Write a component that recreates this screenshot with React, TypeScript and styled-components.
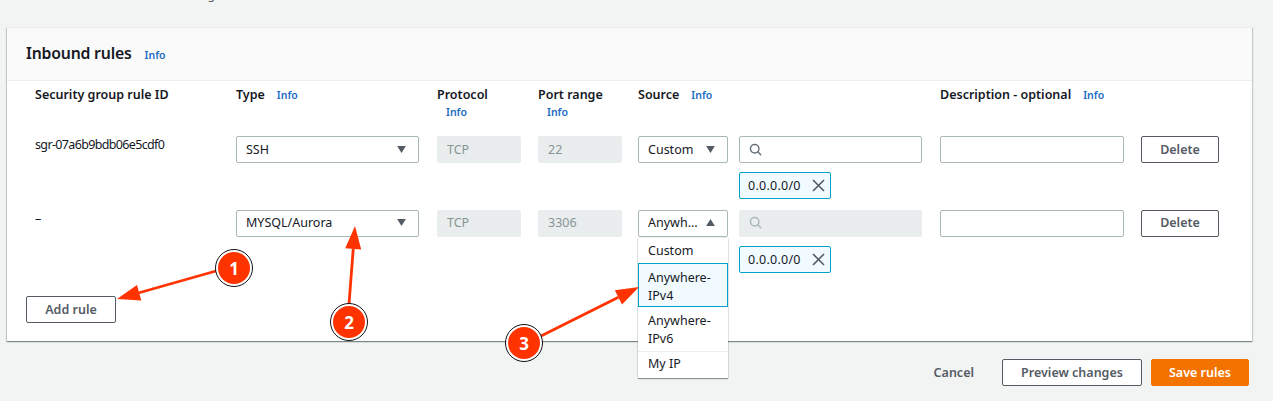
import React from "react";
import styled, { createGlobalStyle } from "styled-components";

const FONT = `"Noto Sans", "Liberation Sans", sans-serif`;

const GlobalStyle = createGlobalStyle`
  html, body {
    margin: 0;
    padding: 0;
    background: #f2f3f3;
  }
  body {
    font-family: ${FONT};
    font-size: 12.5px;
    color: #16191f;
  }
`;

const Page = styled.div`
  position: relative;
  width: 1273px;
  height: 401px;
  overflow: hidden;
  padding: 0 21px 0 7px;
  box-sizing: border-box;
`;

// the line above the panel is cut off by the screenshot, only a descender shows
const CutLine = styled.div`
  height: 27px;
  overflow: hidden;
  padding-left: 190px;
  color: #545b64;
  font-size: 12px;
  line-height: 14px;
  span {
    display: block;
    margin-top: -12px;
  }
`;

const Panel = styled.section`
  background: #fff;
  height: 314px;
  box-shadow: 0 1px 1px 0 rgba(0, 28, 36, 0.3), 1px 1px 1px 0 rgba(0, 28, 36, 0.15),
    -1px 1px 1px 0 rgba(0, 28, 36, 0.15);
  border-top: 1px solid #eaeded;
  box-sizing: border-box;
`;

const PanelHeader = styled.header`
  height: 53px;
  box-sizing: border-box;
  background: #fafafa;
  border-bottom: 1px solid #eaeded;
  padding: 14px 19px;
  display: flex;
  align-items: baseline;
  gap: 13px;
`;

const Title = styled.h2`
  margin: 0;
  font-size: 15.8px;
  line-height: 22px;
  font-weight: 600;
  letter-spacing: -0.2px;
`;

const InfoLink = styled.a`
  color: #1a6bc4;
  font-size: 10.5px;
  font-weight: 600;
  line-height: 14px;
`;

const RulesGrid = styled.div`
  display: grid;
  grid-template-columns: 201px 201px 101px 100px 101px 201px 201px 78px;
  padding: 5px 0 0 28px;
`;

const HeadCell = styled.div`
  font-size: 12.5px;
  font-weight: 600;
  line-height: 18px;
  height: 50px;
  display: flex;
  flex-wrap: wrap;
  align-items: baseline;
  align-content: flex-start;
  column-gap: 12px;
`;

const StackedInfo = styled(InfoLink)`
  display: block;
  width: 100%;
  margin: -1px 0 0 9px;
  line-height: 18px;
`;

const Cell = styled.div`
  height: 74px;
  display: flex;
  flex-direction: column;
  align-items: flex-start;
`;

const RuleId = styled.span`
  line-height: 16px;
  margin-top: 1px;
  letter-spacing: -0.65px;
`;

const Control = styled.div<{ $width: number; $disabled?: boolean; $raised?: boolean }>`
  width: ${(p) => p.$width}px;
  height: 27px;
  flex: none;
  box-sizing: border-box;
  border: 1px solid ${(p) => (p.$disabled ? "#eaeded" : "#aab7b8")};
  border-radius: 2px;
  background: ${(p) => (p.$disabled ? "#eaeded" : "#fff")};
  color: ${(p) => (p.$disabled ? "#879596" : "#16191f")};
  padding: 0 12px ${(p) => (p.$raised ? 2 : 0)}px 9px;
  display: flex;
  align-items: center;
  justify-content: space-between;
  white-space: nowrap;
`;

const Caret = styled.svg`
  width: 9px;
  height: 7px;
  fill: #545b64;
  flex: none;
`;

const SearchIcon = styled.svg<{ $muted?: boolean }>`
  width: 13px;
  height: 13px;
  fill: none;
  stroke: ${(p) => (p.$muted ? "#aab7b8" : "#687078")};
  stroke-width: 1.8;
`;

const SearchBox = styled(Control)`
  justify-content: flex-start;
`;

const Token = styled.div`
  margin-top: 9px;
  width: 92px;
  height: 27px;
  box-sizing: border-box;
  border: 1px solid #00a1c9;
  border-radius: 2px;
  background: #f1faff;
  padding: 0 5px 0 8px;
  display: flex;
  align-items: center;
  justify-content: space-between;
  letter-spacing: 0.25px;
`;

const TokenClose = styled.svg`
  width: 13px;
  height: 13px;
  stroke: #545b64;
  stroke-width: 1.6;
  fill: none;
`;

const Button = styled.button<{ $width?: number; $raised?: boolean }>`
  width: ${(p) => p.$width ?? 78}px;
  height: 27px;
  box-sizing: border-box;
  border: 1px solid #545b64;
  border-radius: 2px;
  background: #fff;
  color: #545b64;
  font-family: ${FONT};
  font-size: 12.5px;
  font-weight: 600;
  padding: 0 0 ${(p) => (p.$raised ? 2 : 0)}px;
`;

const AddRow = styled.div`
  padding: 12px 0 0 19px;
`;

const Footer = styled.footer`
  display: flex;
  justify-content: flex-end;
  align-items: center;
  margin-top: 18px;
  padding-right: 3px;
`;

const CancelLink = styled.span`
  color: #545b64;
  font-weight: 600;
  font-size: 12.5px;
  margin-right: 28px;
`;

const PrimaryButton = styled(Button)`
  background: #f37300;
  border-color: #f37300;
  color: #fff;
  margin-left: 9px;
`;

const SourceMenu = styled.ul`
  position: absolute;
  left: 638px;
  top: 238px;
  width: 90px;
  margin: 0;
  padding: 0;
  list-style: none;
  background: #fff;
  box-sizing: border-box;
  box-shadow: 0 1px 1px 0 rgba(0, 28, 36, 0.4), 0 0 1px 0 rgba(0, 28, 36, 0.4);
  z-index: 2;
`;

const MenuItem = styled.li`
  box-sizing: border-box;
  line-height: 18px;
  padding: 5px 10px 3px;
`;

const FirstMenuItem = styled(MenuItem)`
  padding: 4px 10px 3px;
`;

const ActiveMenuItem = styled(MenuItem)`
  padding: 5px 9px 1px;
  border: 1px solid #00a1c9;
  background: #f1faff;
`;

const LastMenuItem = styled(MenuItem)`
  padding: 3px 10px 5px;
  border-top: 1px solid #eaeded;
`;

const Arrows = styled.svg`
  position: absolute;
  left: 0;
  top: 0;
  width: 1273px;
  height: 401px;
  z-index: 3;
  pointer-events: none;
`;

const Badge = styled.div<{ $x: number; $y: number }>`
  position: absolute;
  left: ${(p) => p.$x}px;
  top: ${(p) => p.$y}px;
  width: 36px;
  height: 36px;
  box-sizing: border-box;
  border-radius: 50%;
  background: #ff3300;
  border: 2px solid #fff;
  outline: 1px solid #111;
  color: #fff;
  font-size: 17px;
  font-weight: 700;
  display: flex;
  align-items: center;
  justify-content: center;
  z-index: 4;
`;

const Magnifier = ({ muted }: { muted?: boolean }) => (
  <SearchIcon $muted={muted} viewBox="0 0 16 16">
    <circle cx="7" cy="7" r="5.2" />
    <path d="M10.8 10.8L15 15" />
  </SearchIcon>
);

const DownCaret = () => (
  <Caret viewBox="0 0 10 8">
    <path d="M0 0h10L5 8z" />
  </Caret>
);

const UpCaret = () => (
  <Caret viewBox="0 0 10 8">
    <path d="M0 8h10L5 0z" />
  </Caret>
);

const CidrToken = () => (
  <Token>
    0.0.0.0/0
    <TokenClose viewBox="0 0 13 13">
      <path d="M1 1l11 11M12 1L1 12" />
    </TokenClose>
  </Token>
);

const Arrow = ({ x1, y1, x2, y2 }: { x1: number; y1: number; x2: number; y2: number }) => {
  const angle = Math.atan2(y2 - y1, x2 - x1);
  const len = 23;
  const half = 8;
  const bx = x2 - len * Math.cos(angle);
  const by = y2 - len * Math.sin(angle);
  const nx = -Math.sin(angle) * half;
  const ny = Math.cos(angle) * half;
  return (
    <g>
      <line x1={x1} y1={y1} x2={bx} y2={by} stroke="#ff3300" strokeWidth="2.8" />
      <polygon
        points={`${x2},${y2} ${bx + nx},${by + ny} ${bx - nx},${by - ny}`}
        fill="#ff3300"
      />
    </g>
  );
};

const App = () => {
  return (
    <Page>
      <GlobalStyle />
      <CutLine>
        <span>ing</span>
      </CutLine>
      <Panel>
        <PanelHeader>
          <Title>Inbound rules</Title>
          <InfoLink>Info</InfoLink>
        </PanelHeader>
        <RulesGrid>
          <HeadCell>Security group rule ID</HeadCell>
          <HeadCell>
            Type <InfoLink>Info</InfoLink>
          </HeadCell>
          <HeadCell>
            Protocol <StackedInfo>Info</StackedInfo>
          </HeadCell>
          <HeadCell>
            Port range <StackedInfo>Info</StackedInfo>
          </HeadCell>
          <HeadCell>
            Source <InfoLink>Info</InfoLink>
          </HeadCell>
          <HeadCell />
          <HeadCell>
            Description - optional <InfoLink>Info</InfoLink>
          </HeadCell>
          <HeadCell />

          <Cell>
            <RuleId>sgr-07a6b9bdb06e5cdf0</RuleId>
          </Cell>
          <Cell>
            <Control $width={183}>
              SSH
              <DownCaret />
            </Control>
          </Cell>
          <Cell>
            <Control $width={84} $disabled>
              TCP
            </Control>
          </Cell>
          <Cell>
            <Control $width={84} $disabled>
              22
            </Control>
          </Cell>
          <Cell>
            <Control $width={90}>
              Custom
              <DownCaret />
            </Control>
          </Cell>
          <Cell>
            <SearchBox $width={183}>
              <Magnifier />
            </SearchBox>
            <CidrToken />
          </Cell>
          <Cell>
            <Control $width={184} />
          </Cell>
          <Cell>
            <Button>Delete</Button>
          </Cell>

          <Cell>
            <RuleId>–</RuleId>
          </Cell>
          <Cell>
            <Control $width={183} $raised>
              MYSQL/Aurora
              <DownCaret />
            </Control>
          </Cell>
          <Cell>
            <Control $width={84} $disabled $raised>
              TCP
            </Control>
          </Cell>
          <Cell>
            <Control $width={84} $disabled $raised>
              3306
            </Control>
          </Cell>
          <Cell>
            <Control $width={90} $raised>
              Anywh...
              <UpCaret />
            </Control>
          </Cell>
          <Cell>
            <SearchBox $width={183} $disabled $raised>
              <Magnifier muted />
            </SearchBox>
            <CidrToken />
          </Cell>
          <Cell>
            <Control $width={184} />
          </Cell>
          <Cell>
            <Button $raised>Delete</Button>
          </Cell>
        </RulesGrid>
        <AddRow>
          <Button $width={90}>Add rule</Button>
        </AddRow>
      </Panel>
      <Footer>
        <CancelLink>Cancel</CancelLink>
        <Button $width={140}>Preview changes</Button>
        <PrimaryButton $width={98}>Save rules</PrimaryButton>
      </Footer>

      <SourceMenu>
        <FirstMenuItem>Custom</FirstMenuItem>
        <ActiveMenuItem>
          Anywhere-
          <br />
          IPv4
        </ActiveMenuItem>
        <MenuItem>
          Anywhere-
          <br />
          IPv6
        </MenuItem>
        <LastMenuItem>My IP</LastMenuItem>
      </SourceMenu>

      <Arrows viewBox="0 0 1273 401">
        <Arrow x1={216} y1={271} x2={117} y2={299} />
        <Arrow x1={349} y1={304} x2={355} y2={226} />
        <Arrow x1={541} y1={336} x2={639} y2={287} />
      </Arrows>
      <Badge $x={216} $y={250}>1</Badge>
      <Badge $x={331} $y={304}>2</Badge>
      <Badge $x={506} $y={325}>3</Badge>
    </Page>
  );
};

export default App;
